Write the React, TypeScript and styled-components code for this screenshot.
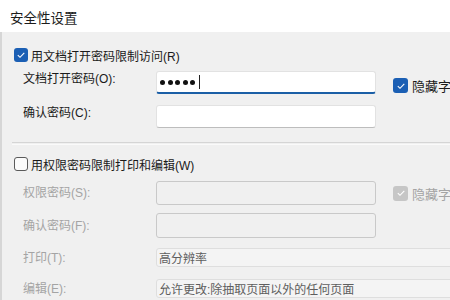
import styled, { createGlobalStyle } from "styled-components";

const GlobalStyle = createGlobalStyle`
    body {
        margin: 0;
        font-family: "Liberation Sans", "Noto Sans CJK SC", sans-serif;
    }
`;

const Window = styled.div`
    width: 450px;
    height: 300px;
    overflow: hidden;
    background: #f0f0f0;
    display: flex;
    flex-direction: column;
`;

const TitleBar = styled.div`
    height: 32px;
    flex-shrink: 0;
    background: #ffffff;
    padding: 2px 0 0 10px;
    box-sizing: border-box;
    display: flex;
    align-items: center;
    font-size: 13.5px;
    color: #1c1c1c;
`;

const Body = styled.div`
    flex: 1;
    border-left: 2px solid #d6d6d6;
    padding: 16px 0 0 12px;
    display: flex;
    flex-direction: column;
    white-space: nowrap;
`;

const CheckRow = styled.label<{ $top?: number }>`
    display: flex;
    align-items: center;
    gap: 3px;
    height: 14px;
    margin-top: ${p => p.$top ?? 0}px;
    font-size: 12px;
    color: #1a1a1a;
`;

const Row = styled.div<{ $top: number; $center?: boolean }>`
    display: flex;
    align-items: ${p => (p.$center ? "center" : "flex-start")};
    margin-top: ${p => p.$top}px;
    padding-left: 9px;
`;

const Label = styled.span<{ $disabled?: boolean }>`
    width: 133px;
    flex-shrink: 0;
    font-size: 12px;
    line-height: 16px;
    color: ${p => (p.$disabled ? "#a4a4a4" : "#1a1a1a")};
`;

const TextBox = styled.div<{ $focused?: boolean; $disabled?: boolean; $h?: number }>`
    width: 220px;
    height: ${p => p.$h ?? 23}px;
    flex-shrink: 0;
    box-sizing: border-box;
    border-radius: 3px;
    border: 1px solid ${p => (p.$disabled ? "#c9c9c9" : "#e2e2e2")};
    border-bottom: ${p =>
        p.$focused ? "2px solid #1b5fa6" : p.$disabled ? "1px solid #c9c9c9" : "1px solid #bdbdbd"};
    background: ${p => (p.$disabled ? "#f0f0f0" : "#ffffff")};
    display: flex;
    align-items: center;
    padding-left: 3px;
    gap: 2.5px;
`;

const Dot = styled.span`
    width: 5px;
    height: 5px;
    border-radius: 50%;
    background: #111;
`;

const Caret = styled.span`
    width: 1px;
    height: 14px;
    margin-left: 1px;
    background: #222;
`;

const Select = styled.div<{ $h: number }>`
    width: 320px;
    height: ${p => p.$h}px;
    flex-shrink: 0;
    box-sizing: border-box;
    border: 1px solid #dedede;
    border-radius: 3px;
    background: #f4f4f4;
    padding-left: 2px;
    display: flex;
    align-items: center;
    font-size: 12px;
    color: #5e5e5e;
`;

const Side = styled.label<{ $disabled?: boolean }>`
    display: flex;
    align-items: center;
    gap: 4px;
    margin-left: 17px;
    margin-top: ${p => (p.$disabled ? 0 : 5)}px;
    font-size: 13px;
    color: ${p => (p.$disabled ? "#a4a4a4" : "#1a1a1a")};
`;

const Box = styled.span<{ $checked?: boolean; $disabled?: boolean; $size?: number }>`
    width: ${p => p.$size ?? 14}px;
    height: ${p => p.$size ?? 14}px;
    flex-shrink: 0;
    box-sizing: border-box;
    border-radius: 3px;
    display: flex;
    align-items: center;
    justify-content: center;
    background: ${p => (!p.$checked ? "#fbfbfb" : p.$disabled ? "#c6c6c6" : "#1b5fb4")};
    border: ${p => (p.$checked ? "none" : "1px solid #5a5a5a")};
`;

const Separator = styled.div`
    margin: 14px 0 0 -2px;
    height: 1px;
    border-top: 1px solid #d5d5d5;
    border-bottom: 1px solid #fafafa;
`;

const Check = ({ checked, disabled, size }: { checked?: boolean; disabled?: boolean; size?: number }) => (
    <Box $checked={checked} $disabled={disabled} $size={size}>
        {checked && (
            <svg width="10" height="10" viewBox="0 0 10 10">
                <polyline points="1.8,5.2 4,7.3 8.3,2.8" fill="none" stroke="#fff" strokeWidth="1.1" />
            </svg>
        )}
    </Box>
);

const App = () => {
    return (
        <Window>
            <GlobalStyle />
            <TitleBar>安全性设置</TitleBar>
            <Body>
                <CheckRow>
                    <Check checked />
                    用文档打开密码限制访问(R)
                </CheckRow>
                <Row $top={9}>
                    <Label>文档打开密码(O):</Label>
                    <TextBox $focused>
                        {[0, 1, 2, 3, 4].map(i => <Dot key={i} />)}
                        <Caret />
                    </TextBox>
                    <Side>
                        <Check checked size={15} />
                        隐藏字符
                    </Side>
                </Row>
                <Row $top={10}>
                    <Label>确认密码(C):</Label>
                    <TextBox />
                </Row>
                <Separator />
                <CheckRow $top={12}>
                    <Check />
                    用权限密码限制打印和编辑(W)
                </CheckRow>
                <Row $top={10} $center>
                    <Label $disabled>权限密码(S):</Label>
                    <TextBox $disabled $h={24} />
                    <Side $disabled>
                        <Check checked disabled size={15} />
                        隐藏字符
                    </Side>
                </Row>
                <Row $top={8} $center>
                    <Label $disabled>确认密码(F):</Label>
                    <TextBox $disabled $h={25} />
                </Row>
                <Row $top={10} $center>
                    <Label $disabled>打印(T):</Label>
                    <Select $h={19}>高分辨率</Select>
                </Row>
                <Row $top={12} $center>
                    <Label $disabled>编辑(E):</Label>
                    <Select $h={19}>允许更改:除抽取页面以外的任何页面</Select>
                </Row>
            </Body>
        </Window>
    );
};

export default App;
